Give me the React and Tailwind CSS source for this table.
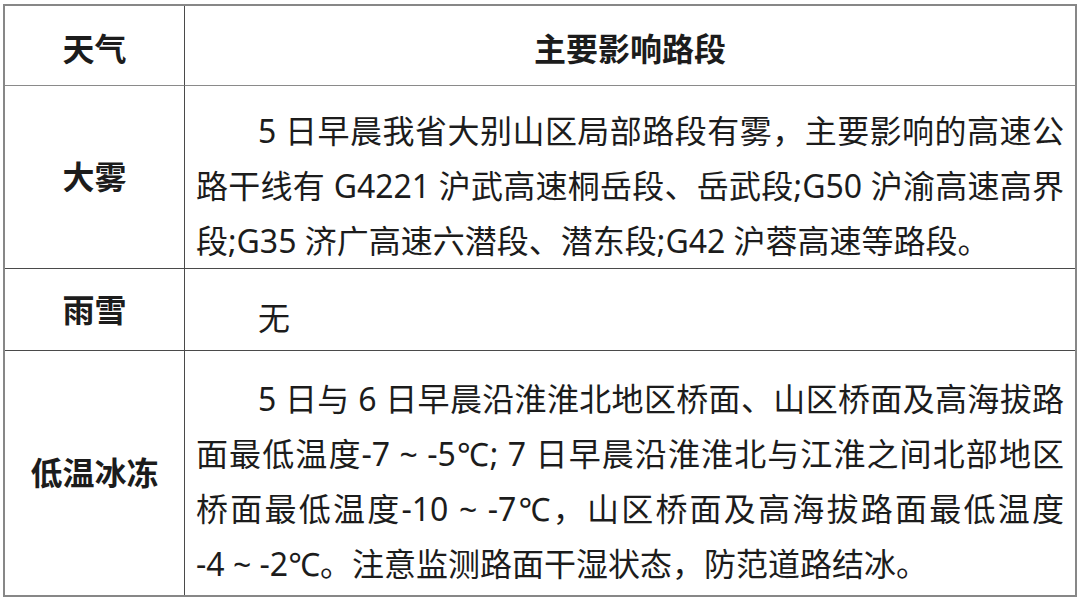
const rows = [
  {
    label: '大雾',
    height: 'h-[183px]',
    lines: [
      '5 日早晨我省大别山区局部路段有雾，主要影响的高速公',
      '路干线有 G4221 沪武高速桐岳段、岳武段;G50 沪渝高速高界',
      '段;G35 济广高速六潜段、潜东段;G42 沪蓉高速等路段。',
    ],
  },
  {
    label: '雨雪',
    height: 'h-[82px]',
    lines: ['无'],
  },
  {
    label: '低温冰冻',
    height: 'h-[244px]',
    lines: [
      '5 日与 6 日早晨沿淮淮北地区桥面、山区桥面及高海拔路',
      '面最低温度-7 ~ -5℃; 7 日早晨沿淮淮北与江淮之间北部地区',
      '桥面最低温度-10 ~ -7℃，山区桥面及高海拔路面最低温度',
      '-4 ~ -2℃。注意监测路面干湿状态，防范道路结冰。',
    ],
  },
];

const App = () => {
  return (
    <div
      className="w-[1080px] h-[605px] bg-white pt-[4px] pl-[3px] text-[#1c1c1c]"
      style={{ fontFamily: '"Noto Sans", "Noto Sans CJK SC", sans-serif' }}
    >
      <div className="w-[1074px] border-2 border-[#878787] grid grid-cols-[180px_1fr]">
        {/* Header */}
        <div className="h-[80px] border-r border-b border-r-[#4a4a4a] border-b-[#8a8a8a] flex items-center justify-center pt-[6px] text-[32px] font-bold">
          天气
        </div>
        <div className="h-[80px] border-b border-[#8a8a8a] flex items-center justify-center pt-[6px] text-[32px] font-bold">
          主要影响路段
        </div>

        {rows.map((row, i) => {
          const last = i === rows.length - 1;
          return [
            <div
              key={row.label + '-l'}
              className={`${row.height} border-r border-[#4a4a4a] ${last ? '' : 'border-b'} flex items-center justify-center text-[32px] font-bold`}
            >
              {row.label}
            </div>,
            <div
              key={row.label + '-r'}
              className={`${row.height} border-[#4a4a4a] ${last ? '' : 'border-b'} flex flex-col justify-center pt-4 px-[11px] text-[32px] leading-[55px]`}
            >
              {row.lines.map((line, j) => (
                <div
                  key={j}
                  className={`${j === 0 ? 'indent-[62px]' : ''} ${j < row.lines.length - 1 ? 'text-justify [text-align-last:justify]' : ''}`}
                >
                  {line}
                </div>
              ))}
            </div>,
          ];
        })}
      </div>
    </div>
  );
};

export default App;
